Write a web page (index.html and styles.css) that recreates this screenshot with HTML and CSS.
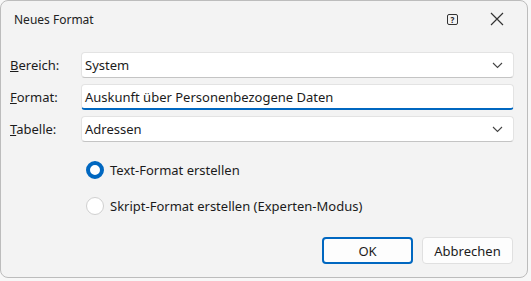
FILE: index.html
```html
<!DOCTYPE html>
<html lang="de">
<head>
  <meta charset="UTF-8" />
  <title>Neues Format</title>
  <link rel="stylesheet" href="styles.css">
</head>
<body>

  <div class="window">
    <div class="titlebar">
      <span class="title">Neues Format</span>
      <span class="help">?</span>
      <svg class="close" width="14" height="14" viewBox="0 0 14 14">
        <path d="M1 1 L13 13 M13 1 L1 13" stroke="#333" stroke-width="1.2" fill="none" />
      </svg>
    </div>

    <div class="form">
      <div class="row">
        <label><u>B</u>ereich:</label>
        <div class="field combo">
          <span>System</span>
          <svg class="chevron" width="11" height="7" viewBox="0 0 11 7">
            <path d="M1 1 L5.5 5.5 L10 1" stroke="#444" stroke-width="1.1" fill="none" />
          </svg>
        </div>
      </div>
      <div class="row">
        <label><u>F</u>ormat:</label>
        <div class="field focused">
          <span>Auskunft über Personenbezogene Daten</span>
        </div>
      </div>
      <div class="row">
        <label><u>T</u>abelle:</label>
        <div class="field combo">
          <span>Adressen</span>
          <svg class="chevron" width="11" height="7" viewBox="0 0 11 7">
            <path d="M1 1 L5.5 5.5 L10 1" stroke="#444" stroke-width="1.1" fill="none" />
          </svg>
        </div>
      </div>
    </div>

    <div class="options">
      <div class="option">
        <span class="radio checked"></span>
        <span>Text-Format erstellen</span>
      </div>
      <div class="option">
        <span class="radio"></span>
        <span>Skript-Format erstellen (Experten-Modus)</span>
      </div>
    </div>

    <div class="buttons">
      <button class="primary">OK</button>
      <button>Abbrechen</button>
    </div>
  </div>

</body>
</html>
```

FILE: styles.css
```css
body {
  margin: 0;
  background: #f7f7f7;
  font-family: 'Noto Sans', sans-serif;
  font-size: 13px;
  color: #1b1b1b;
}

.window {
  width: 528px;
  height: 278px;
  box-sizing: border-box;
  border: 1px solid #bcbcbc;
  border-radius: 8px;
  background: #f3f3f3;
  display: flex;
  flex-direction: column;
}

.titlebar {
  display: flex;
  align-items: center;
  height: 36px;
  padding: 0 23px 0 13px;
}

.title {
  flex: 1;
  font-size: 12px;
  color: #222;
}

.help {
  width: 9px;
  height: 9px;
  border: 1.5px solid #333;
  border-radius: 2px;
  font-size: 8px;
  font-weight: bold;
  line-height: 9px;
  text-align: center;
  margin-right: 32px;
  margin-top: 1px;
}

.close {
  display: block;
}

.form {
  display: flex;
  flex-direction: column;
  gap: 6px;
  padding: 15px 13px 0 9px;
}

.row {
  display: flex;
  align-items: center;
}

.row label {
  width: 71px;
}

.field {
  flex: 1;
  height: 26px;
  box-sizing: border-box;
  background: #fff;
  border: 1px solid #e3e3e3;
  border-bottom-color: #c4c4c4;
  border-radius: 4px;
  display: flex;
  align-items: center;
  padding: 0 10px 0 3px;
}

.field span {
  flex: 1;
}

.focused {
  border-bottom: 2px solid #0067c0;
}

.chevron {
  display: block;
}

.options {
  display: flex;
  flex-direction: column;
  gap: 18px;
  padding: 19px 0 0 85px;
}

.option {
  display: flex;
  align-items: center;
  gap: 6px;
}

.radio {
  width: 18px;
  height: 18px;
  box-sizing: border-box;
  border-radius: 50%;
  border: 1px solid #d0d0d0;
  background: #fff;
}

.radio.checked {
  border: 4px solid #0067c0;
}

.buttons {
  display: flex;
  justify-content: flex-end;
  gap: 9px;
  margin-top: auto;
  padding: 0 14px 13px 0;
}

button {
  width: 91px;
  height: 27px;
  box-sizing: border-box;
  font-family: 'Noto Sans', sans-serif;
  font-size: 13px;
  color: #1b1b1b;
  background: #fdfdfd;
  border: 1px solid #e0e0e0;
  border-radius: 4px;
}

button.primary {
  border: 2px solid #0067c0;
}
```
